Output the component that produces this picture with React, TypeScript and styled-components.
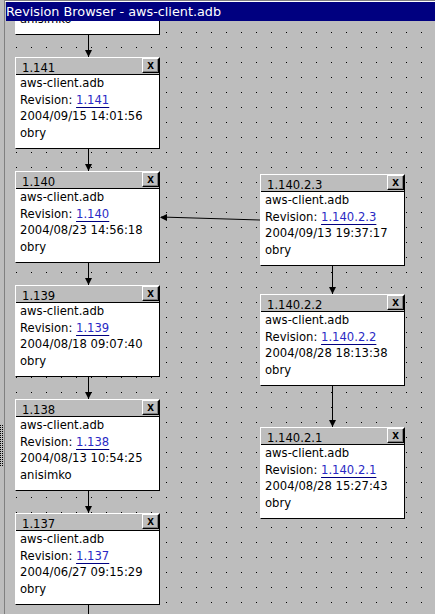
import React from "react";
import styled, { createGlobalStyle } from "styled-components";

const Global = createGlobalStyle`
  html, body { margin: 0; padding: 0; background: #bdbdbd; }
  body { font-family: "DejaVu Sans", "Liberation Sans", sans-serif; }
`;

const Frame = styled.div`
  width: 435px;
  height: 614px;
  display: flex;
  overflow: hidden;
  background: #bdbdbd;
`;

const Side = styled.div`
  width: 4px;
  flex: none;
  border-right: 1px solid #808080;
  display: flex;
  flex-direction: column;
`;

const Grip = styled.div`
  margin-top: 425px;
  height: 42px;
  width: 4px;
  background-image: linear-gradient(to right, transparent 1px, #bdbdbd 1px),
    linear-gradient(to bottom, #000 1px, #bdbdbd 1px);
  background-size: 2px 2px;
`;

const Main = styled.div`
  flex: 1;
  display: flex;
  flex-direction: column;
  min-width: 0;
`;

const TitleBar = styled.div`
  height: 19px;
  flex: none;
  border-top: 1px solid #808080;
  box-shadow: inset 0 1px 0 #ffffff;
  padding-top: 1px;
  padding-left: 1px;
  background: #000080;
  background-clip: content-box;
  color: #fff;
  font-size: 12.8px;
  line-height: 19px;
  white-space: nowrap;
`;

const Canvas = styled.div`
  position: relative;
  flex: 1;
  overflow: hidden;
  background-color: #bdbdbd;
  background-image: linear-gradient(to right, transparent 1px, #bdbdbd 1px),
    linear-gradient(to bottom, #000 1px, #bdbdbd 1px);
  background-size: 15px 15px;
  background-position: 11px 11px;
`;

const Edges = styled.svg`
  position: absolute;
  left: 0;
  top: 0;
  width: 100%;
  height: 100%;
  pointer-events: none;
`;

const Node = styled.div<{ $x: number; $y: number }>`
  position: absolute;
  left: ${(p) => p.$x}px;
  top: ${(p) => p.$y}px;
  width: 145px;
  height: 92px;
  box-sizing: border-box;
  background: #fff;
  border: 1px solid;
  border-color: #ffffff #000 #000 #ffffff;
  display: flex;
  flex-direction: column;
  color: #000;
`;

const Header = styled.div`
  height: 16px;
  flex: none;
  background: #bdbdbd;
  border-bottom: 1px solid #000;
  display: flex;
  justify-content: space-between;
  align-items: flex-start;
`;

const HeaderTitle = styled.span`
  padding: 3px 0 0 6px;
  font-size: 11.6px;
  line-height: 14px;
`;

const CloseButton = styled.div`
  width: 17px;
  height: 15px;
  box-sizing: border-box;
  border: 1px solid;
  border-color: #fff #000 #000 #fff;
  box-shadow: inset -1px -1px 0 #808080;
  background: #bdbdbd;
  display: flex;
  align-items: center;
  justify-content: center;
  font-family: "Liberation Sans", sans-serif;
  font-weight: bold;
  font-size: 12px;
  line-height: 12px;
  padding-bottom: 2px;
`;

const Body = styled.div`
  padding: 0 0 0 4px;
  font-size: 11.6px;
  line-height: 16.5px;
  white-space: nowrap;
`;

const Line = styled.div``;

const RevLink = styled.a`
  color: #2828c4;
  text-decoration: underline;
  text-decoration-color: #000080;
  text-underline-offset: 3px;
`;

type Rev = { rev: string; date: string; author: string; x: number; y: number };

const nodes: Rev[] = [
  { rev: "1.142", date: "2004/09/20 10:00:00", author: "anisimko", x: 10, y: -78 },
  { rev: "1.141", date: "2004/09/15 14:01:56", author: "obry", x: 10, y: 36 },
  { rev: "1.140", date: "2004/08/23 14:56:18", author: "obry", x: 10, y: 150 },
  { rev: "1.139", date: "2004/08/18 09:07:40", author: "obry", x: 10, y: 264 },
  { rev: "1.138", date: "2004/08/13 10:54:25", author: "anisimko", x: 10, y: 378 },
  { rev: "1.137", date: "2004/06/27 09:15:29", author: "obry", x: 10, y: 492 },
  { rev: "1.140.2.3", date: "2004/09/13 19:37:17", author: "obry", x: 255, y: 153 },
  { rev: "1.140.2.2", date: "2004/08/28 18:13:38", author: "obry", x: 255, y: 273 },
  { rev: "1.140.2.1", date: "2004/08/28 15:27:43", author: "obry", x: 255, y: 406 },
];

const DownArrow = ({ x, y1, y2, head = true }: { x: number; y1: number; y2: number; head?: boolean }) => (
  <g>
    <line x1={x + 0.5} y1={y1} x2={x + 0.5} y2={y2} stroke="#000" strokeWidth={1} shapeRendering="crispEdges" />
    {head && <polygon points={`${x - 3},${y2 - 7} ${x + 4},${y2 - 7} ${x + 0.5},${y2}`} fill="#000" />}
  </g>
);

export default function App() {
  return (
    <>
      <Global />
      <Frame>
        <Side>
          <Grip />
        </Side>
        <Main>
          <TitleBar>Revision Browser - aws-client.adb</TitleBar>
          <Canvas>
            <Edges>
              <DownArrow x={83} y1={14} y2={36} />
              <DownArrow x={83} y1={128} y2={150} />
              <DownArrow x={83} y1={242} y2={264} />
              <DownArrow x={83} y1={356} y2={378} />
              <DownArrow x={83} y1={470} y2={492} />
              <DownArrow x={83} y1={584} y2={640} head={false} />
              <DownArrow x={327} y1={245} y2={273} />
              <DownArrow x={327} y1={365} y2={406} />
              <line x1={255} y1={199} x2={156} y2={196} stroke="#000" strokeWidth={1} />
              <polygon points="155,196.5 162,193 162,200" fill="#000" />
            </Edges>
            {nodes.map((n) => (
              <Node key={n.rev} $x={n.x} $y={n.y}>
                <Header>
                  <HeaderTitle>{n.rev}</HeaderTitle>
                  <CloseButton>x</CloseButton>
                </Header>
                <Body>
                  <Line>aws-client.adb</Line>
                  <Line>
                    Revision: <RevLink>{n.rev}</RevLink>
                  </Line>
                  <Line>{n.date}</Line>
                  <Line>{n.author}</Line>
                </Body>
              </Node>
            ))}
          </Canvas>
        </Main>
      </Frame>
    </>
  );
}
